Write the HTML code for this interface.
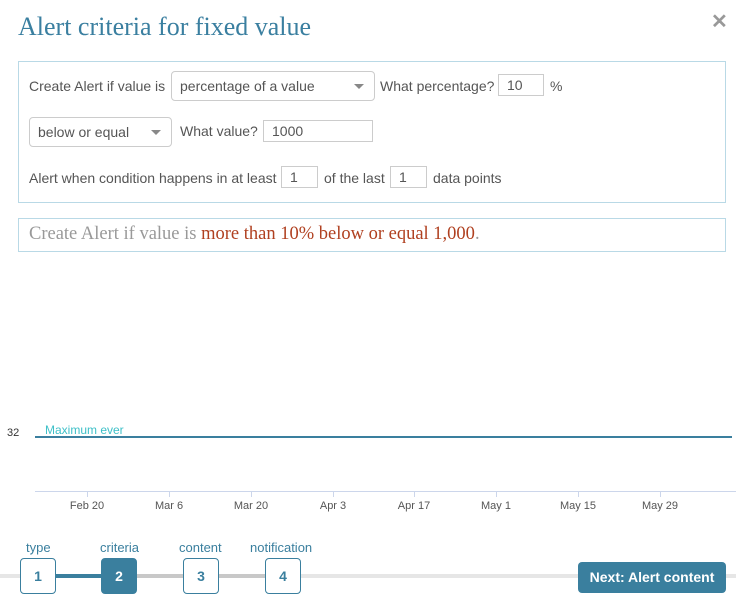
<!DOCTYPE html>
<html><head><style>
body{margin:0;width:736px;height:604px;background:#fff;position:relative;overflow:hidden;font-family:"Liberation Sans",sans-serif;font-size:14px;color:#555}
.a{position:absolute}
.t{white-space:nowrap}
.in{position:absolute;border:1px solid #ccc;box-sizing:border-box;padding:0 8px;line-height:20px;font-size:14px;color:#555}
.sel{position:absolute;border:1px solid #ccc;border-radius:4px;box-sizing:border-box;padding:0 8px;font-size:14px;color:#555}
.sel:after{content:"";position:absolute;right:10px;top:12px;border:5px solid transparent;border-top:5px solid #888}
.step{position:absolute;top:558px;width:36px;height:36px;box-sizing:border-box;border:1px solid #3a7f9e;border-radius:4px;background:#fff;color:#3a7f9e;font-weight:bold;text-align:center;line-height:34px;font-size:14px}
.sl{position:absolute;top:540px;color:#3a7f9e;font-size:13px}
.xl{position:absolute;top:500px;font-size:11px;color:#555;transform:translateX(-50%)}
.tk{position:absolute;top:491px;width:1px;height:6px;background:#ccd6eb}
</style></head><body>
<div class="a t" style="left:18px;top:12px;font-family:'Liberation Serif',serif;font-size:26px;color:#3a7fa0">Alert criteria for fixed value</div>
<div class="a" style="left:711px;top:9px;font-size:20px;color:#999;font-weight:bold">✕</div>
<div class="a" style="left:18px;top:61px;width:708px;height:142px;border:1px solid #b9d9e6;box-sizing:border-box"></div>
<div class="a t" style="left:29px;top:78px">Create Alert if value is</div>
<div class="sel" style="left:171px;top:71px;width:204px;height:30px;line-height:28px">percentage of a value</div>
<div class="a t" style="left:380px;top:78px">What percentage?</div>
<div class="in" style="left:498px;top:74px;width:46px;height:22px">10</div>
<div class="a t" style="left:550px;top:78px">%</div>
<div class="sel" style="left:29px;top:117px;width:143px;height:30px;line-height:28px">below or equal</div>
<div class="a t" style="left:180px;top:123px">What value?</div>
<div class="in" style="left:263px;top:120px;width:110px;height:22px">1000</div>
<div class="a t" style="left:29px;top:170px">Alert when condition happens in at least</div>
<div class="in" style="left:281px;top:166px;width:37px;height:22px">1</div>
<div class="a t" style="left:324px;top:170px">of the last</div>
<div class="in" style="left:390px;top:166px;width:37px;height:22px">1</div>
<div class="a t" style="left:433px;top:170px">data points</div>
<div class="a" style="left:18px;top:218px;width:708px;height:34px;border:1px solid #b9d9e6;box-sizing:border-box"></div>
<div class="a t" style="left:29px;top:224px;font-family:'Liberation Serif',serif;font-size:18.5px;color:#999">Create Alert if value is <span style="color:#b04020">more than 10% below or equal 1,000</span>.</div>
<div class="a" style="left:7px;top:427px;font-size:11px;color:#333">32</div>
<div class="a t" style="left:45px;top:423px;font-size:12px;color:#3ec0c8">Maximum ever</div>
<div class="a" style="left:35px;top:436px;width:697px;height:2px;background:#3a7f9e"></div>
<div class="a" style="left:35px;top:491px;width:701px;height:1px;background:#ccd6eb"></div>
<div class="tk" style="left:87px"></div><div class="xl" style="left:87px">Feb 20</div>
<div class="tk" style="left:169px"></div><div class="xl" style="left:169px">Mar 6</div>
<div class="tk" style="left:251px"></div><div class="xl" style="left:251px">Mar 20</div>
<div class="tk" style="left:333px"></div><div class="xl" style="left:333px">Apr 3</div>
<div class="tk" style="left:414px"></div><div class="xl" style="left:414px">Apr 17</div>
<div class="tk" style="left:496px"></div><div class="xl" style="left:496px">May 1</div>
<div class="tk" style="left:578px"></div><div class="xl" style="left:578px">May 15</div>
<div class="tk" style="left:660px"></div><div class="xl" style="left:660px">May 29</div>
<div class="a" style="left:0;top:574px;width:736px;height:4px;background:#e6e6e6"></div>
<div class="a" style="left:56px;top:574px;width:228px;height:4px;background:#c8c8c8"></div>
<div class="a" style="left:56px;top:574px;width:46px;height:4px;background:#3a7f9e"></div>
<div class="sl" style="left:26px">type</div>
<div class="sl" style="left:100px">criteria</div>
<div class="sl" style="left:179px">content</div>
<div class="sl" style="left:250px">notification</div>
<div class="step" style="left:20px">1</div>
<div class="step" style="left:101px;background:#3a7f9e;color:#fff">2</div>
<div class="step" style="left:183px">3</div>
<div class="step" style="left:265px">4</div>
<div class="a" style="left:578px;top:562px;width:148px;height:31px;background:#3a7f9e;border-radius:4px;color:#fff;font-weight:bold;text-align:center;line-height:31px;font-size:14px">Next: Alert content</div>
</body></html>
